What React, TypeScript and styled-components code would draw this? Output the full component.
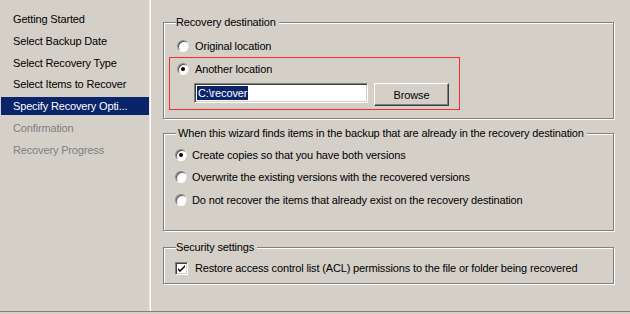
import React from "react";
import styled, { createGlobalStyle, css } from "styled-components";

const Global = createGlobalStyle`
  html, body { margin: 0; padding: 0; background: #d4d0c8; }
  body { font-family: "Liberation Sans", Arial, sans-serif; font-size: 11px; letter-spacing: -0.15px; color: #000; }
  * { box-sizing: border-box; }
`;

const Window = styled.div`
  width: 630px;
  height: 314px;
  background: #d4d0c8;
  display: flex;
  flex-direction: column;
  overflow: hidden;
`;

const Body = styled.div`
  display: flex;
  height: 311px;
  flex: none;
`;

const BottomRule = styled.div`
  height: 3px;
  flex: none;
  border-top: 1px solid #808080;
`;

const Sidebar = styled.nav`
  width: 149px;
  flex: none;
  padding: 10px 0 0 1px;
  display: flex;
  flex-direction: column;
  gap: 3.75px;
`;

const NavItem = styled.div<{ $state?: "active" | "disabled" }>`
  height: 18px;
  flex: none;
  line-height: 18px;
  padding-left: 12px;
  white-space: nowrap;
  color: #000;
  ${(p) =>
    p.$state === "active" &&
    css`
      background: #0a246a;
      color: #fff;
    `}
  ${(p) =>
    p.$state === "disabled" &&
    css`
      color: #808080;
    `}
`;

const Separator = styled.div`
  width: 2px;
  flex: none;
  background: #fdfdfd;
  border-left: 1px solid #ecebe7;
`;

const Main = styled.main`
  flex: 1;
  display: flex;
  flex-direction: column;
  padding: 16px 16px 0 12px;
`;

const Group = styled.fieldset<{ $mt?: number; $pt: number; $pb: number }>`
  flex: none;
  margin: ${(p) => p.$mt ?? 0}px 0 0 0;
  padding: ${(p) => p.$pt}px 6px ${(p) => p.$pb}px 5px;
  border: 1px solid #808080;
  box-shadow: inset 1px 1px 0 #fff, 1px 1px 0 #fff;
  min-width: 0;
  display: flex;
  flex-direction: column;
`;

const Legend = styled.legend<{ $ml?: number }>`
  padding: 0 3px 0 ${(p) => p.$ml ?? 0}px;
  margin-left: 7px;
  line-height: 13px;
  background: #d4d0c8;
`;

const Row = styled.label<{ $indent?: number; $gap?: number }>`
  flex: none;
  display: flex;
  align-items: center;
  height: 16px;
  padding-left: ${(p) => p.$indent ?? 8}px;
  gap: ${(p) => p.$gap ?? 7}px;
  white-space: nowrap;
`;

const Radio = styled.span<{ $checked?: boolean }>`
  position: relative;
  flex: none;
  width: 12px;
  height: 12px;
  border-radius: 50%;
  background: #fff;
  border: 1px solid;
  border-color: #8a8a8a #e6e6e6 #ffffff #8a8a8a;
  box-shadow: inset 1px 1px 0 #505050;
  ${(p) =>
    p.$checked &&
    css`
      &::after {
        content: "";
        position: absolute;
        left: 3px;
        top: 3px;
        width: 4px;
        height: 4px;
        border-radius: 50%;
        background: #000;
      }
    `}
`;

const Check = styled.span`
  flex: none;
  width: 13px;
  height: 13px;
  background: #fff;
  border: 1px solid;
  border-color: #808080 #fff #fff #808080;
  box-shadow: inset 1px 1px 0 #404040, inset -1px -1px 0 #d4d0c8;
  display: flex;
  align-items: center;
  justify-content: center;
`;

const Highlight = styled.div`
  flex: none;
  margin-top: 3px;
  border: 1px solid #ff2a2a;
  width: 291px;
  padding: 3px 0 3px 0;
  display: flex;
  flex-direction: column;
`;

const PathRow = styled.div`
  display: flex;
  align-items: flex-start;
  gap: 6px;
  margin: 6px 0 0 24px;
  height: 23px;
`;

const TextBox = styled.div`
  width: 174px;
  height: 20px;
  background: #fff;
  border: 1px solid;
  border-color: #808080 #fff #fff #808080;
  box-shadow: inset 1px 1px 0 #404040, inset -1px -1px 0 #d4d0c8;
  padding: 2px 0 0 2px;
`;

const Selected = styled.span`
  display: inline-block;
  background: #0a246a;
  color: #fff;
  line-height: 14px;
  padding: 0 1px;
`;

const Button = styled.button`
  width: 75px;
  height: 23px;
  font: inherit;
  letter-spacing: inherit;
  color: #000;
  background: #d4d0c8;
  border: 1px solid;
  border-color: #fff #404040 #404040 #fff;
  box-shadow: inset -1px -1px 0 #808080;
  padding: 0;
`;

const Spacer = styled.div<{ $h: number }>`
  height: ${(p) => p.$h}px;
  flex: none;
`;

const sidebarItems: { label: string; state?: "active" | "disabled" }[] = [
  { label: "Getting Started" },
  { label: "Select Backup Date" },
  { label: "Select Recovery Type" },
  { label: "Select Items to Recover" },
  { label: "Specify Recovery Opti...", state: "active" },
  { label: "Confirmation", state: "disabled" },
  { label: "Recovery Progress", state: "disabled" },
];

const conflictOptions = [
  { label: "Create copies so that you have both versions", checked: true },
  { label: "Overwrite the existing versions with the recovered versions" },
  { label: "Do not recover the items that already exist on the recovery destination" },
];

export default function App() {
  return (
    <>
      <Global />
      <Window>
        <Body>
          <Sidebar>
            {sidebarItems.map((it) => (
              <NavItem key={it.label} $state={it.state}>
                {it.label}
              </NavItem>
            ))}
          </Sidebar>
          <Separator />
          <Main>
            <Group $pt={9} $pb={8}>
              <Legend>Recovery destination</Legend>
              <Row $indent={8} $gap={6}>
                <Radio />
                Original location
              </Row>
              <Highlight>
                <Row $indent={7} $gap={6}>
                  <Radio $checked />
                  Another location
                </Row>
                <PathRow>
                  <TextBox>
                    <Selected>C:\recover</Selected>
                  </TextBox>
                  <Button>Browse</Button>
                </PathRow>
              </Highlight>
            </Group>

            <Group $mt={8} $pt={7} $pb={22}>
              <Legend $ml={2}>When this wizard finds items in the backup that are already in the recovery destination</Legend>
              {conflictOptions.map((o, i) => (
                <React.Fragment key={o.label}>
                  {i > 0 && <Spacer $h={i === 1 ? 6 : 7} />}
                  <Row $indent={6} $gap={5}>
                    <Radio $checked={o.checked} />
                    {o.label}
                  </Row>
                </React.Fragment>
              ))}
            </Group>

            <Group $mt={10} $pt={6} $pb={7}>
              <Legend>Security settings</Legend>
              <Row $indent={6} $gap={7}>
                <Check>
                  <svg width="9" height="9" viewBox="0 0 9 9">
                    <path d="M1 4 L3 6 L8 1 L8 3 L3 8 L1 6 Z" fill="#000" />
                  </svg>
                </Check>
                Restore access control list (ACL) permissions to the file or folder being recovered
              </Row>
            </Group>
          </Main>
        </Body>
        <BottomRule />
      </Window>
    </>
  );
}
